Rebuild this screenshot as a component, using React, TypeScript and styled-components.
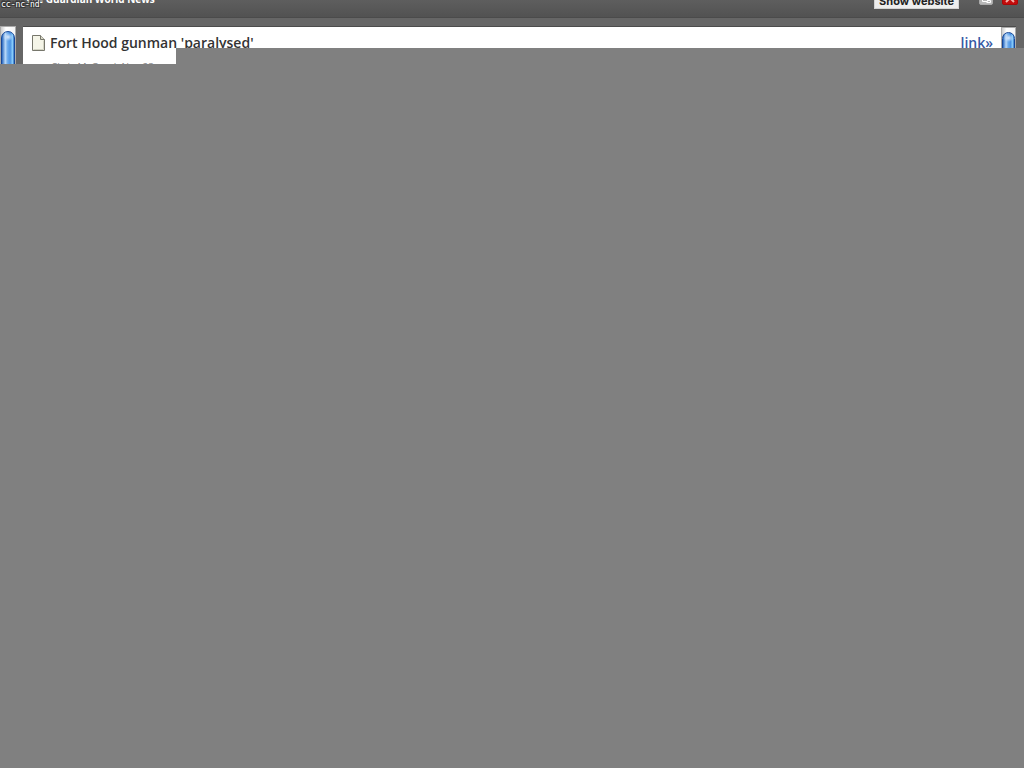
import React from "react";
import styled, { createGlobalStyle } from "styled-components";

const GlobalStyle = createGlobalStyle`
  * { box-sizing: border-box; }
  body {
    margin: 0;
    min-height: 100vh;
    background: #808080;
    font-family: "Open Sans", "Noto Sans", sans-serif;
  }
`;

const Reader = styled.main`
  height: 64px;
  overflow: hidden;
  background: #666;
  clip-path: polygon(0 0, 100% 0, 100% 48px, 176px 48px, 176px 100%, 0 100%);
`;

const Header = styled.header`
  display: flex;
  align-items: flex-end;
  height: 18px;
  padding: 0 6px 0 25px;
  overflow: hidden;
  background: linear-gradient(#5e5e5e, #525252);
  border-bottom: 1px solid #4b4b4b;
`;

const FeedTitle = styled.h1`
  flex: 1;
  margin: 0 0 10px;
  color: #fff;
  font-size: 10px;
  line-height: 16px;
  font-weight: 700;
`;

const Actions = styled.div`
  display: flex;
  flex: none;
  align-items: flex-end;
`;

const WebsiteButton = styled.button`
  height: 20px;
  margin: 0 20px 8px 0;
  padding: 3px 4px 0;
  border: 1px solid #d4d4d4;
  background: #eee;
  color: #222;
  font: 700 11px/14px Inter, Verdana, sans-serif;
  white-space: nowrap;
`;

const WindowButton = styled.button<{ $close?: boolean }>`
  width: ${(p) => (p.$close ? 16 : 14)}px;
  height: 16px;
  margin: 0 ${(p) => (p.$close ? 0 : 9)}px 12px 0;
  padding: 0;
  border: 1px solid ${(p) => (p.$close ? "#a80808" : "#aaa")};
  border-radius: 2px;
  background: ${(p) => (p.$close ? "#c40c0c" : "#b8b8b8")};
  svg { display: block; width: 100%; height: 100%; }
`;

const Body = styled.div`
  display: grid;
  grid-template-columns: 16px minmax(0, 1fr);
  column-gap: 7px;
  height: 46px;
  padding: 8px 8px 0 0;
`;

const Scrollbar = styled.div`
  padding: 4px 0 0;
  border: solid #aaa;
  border-width: 1px 1px 0;
  background: linear-gradient(90deg, #ccc, #fff 35%, #f4f4f4);
`;

const Thumb = styled.div`
  height: 120px;
  border: 1px solid #184898;
  border-radius: 7px;
  background:
    radial-gradient(ellipse 5px 4px at 50% 5px, #d8e8fc, transparent),
    linear-gradient(90deg, #2868c0, #b8d8f8 28%, #68a8ec 48%, #4c94e4 68%, #88ccfa 88%, #3070c0);
`;

const Panel = styled.section`
  display: grid;
  grid-template-columns: minmax(0, 1fr) 15px;
  border-top: 1px solid #4c4c4c;
  background: #fff;
`;

const Article = styled.article`
  padding: 4px 8px 0;
`;

const Row = styled.div`
  display: flex;
  align-items: center;
  height: 24px;
  color: #333;
  svg { flex: none; width: 14px; height: 18px; }
`;

const Headline = styled.h2`
  flex: 1;
  margin: 0 0 0 5px;
  font-size: 14px;
  line-height: 24px;
  font-weight: 600;
`;

const ArticleLink = styled.a`
  color: #3458a4;
  font-size: 14px;
  line-height: 24px;
  font-weight: 600;
  text-decoration: none;
`;

const Meta = styled.p`
  margin: 4px 0 0 20px;
  color: #888;
  font-size: 10px;
  line-height: 16px;
`;

const License = styled.span`
  position: absolute;
  top: 0;
  left: 0;
  height: 9px;
  padding: 0 1px;
  color: #fff;
  font: 8px/9px "DejaVu Sans Mono", monospace;
  text-shadow: 1px 1px #333, -1px -1px #333, 1px -1px #333, -1px 1px #333, 0 -2px #444, 0 -3px #444;
`;

export default function App() {
  return (
    <>
      <GlobalStyle />
      <Reader>
        <Header>
          <FeedTitle>The Guardian World News</FeedTitle>
          <Actions>
            <WebsiteButton type="button">Show website</WebsiteButton>
            <WindowButton type="button" aria-label="Restore">
              <svg viewBox="0 0 12 14" fill="none" stroke="#fff">
                <path d="M2.5 4.5h5v7h-5zM8 10.5h2.5v2h-4" />
                <path d="M4 9.5h2" stroke="#999" />
              </svg>
            </WindowButton>
            <WindowButton type="button" aria-label="Close" $close>
              <svg viewBox="0 0 14 14" fill="none" stroke="#f4b0a8" strokeWidth="2">
                <path d="M3 4l8 8M11 4l-8 8" />
              </svg>
            </WindowButton>
          </Actions>
        </Header>
        <Body>
          <Scrollbar><Thumb /></Scrollbar>
          <Panel>
            <Article>
              <Row>
                <svg viewBox="0 0 14 18" stroke="#77776c">
                  <path d="M1.5 1.5h8l4 4v11h-12z" fill="#f5f5e8" />
                  <path d="M9.5 1.5v4h4" fill="#d8d8c8" />
                  <path d="M12.5 6.5v9h-10" fill="none" stroke="#d4d4c4" />
                </svg>
                <Headline>Fort Hood gunman 'paralysed'</Headline>
                <ArticleLink href="#article">link»</ArticleLink>
              </Row>
              <Meta>Chris McGreal, Nov 23</Meta>
            </Article>
            <Scrollbar><Thumb /></Scrollbar>
          </Panel>
        </Body>
        <License>cc-nc-nd</License>
      </Reader>
    </>
  );
}
